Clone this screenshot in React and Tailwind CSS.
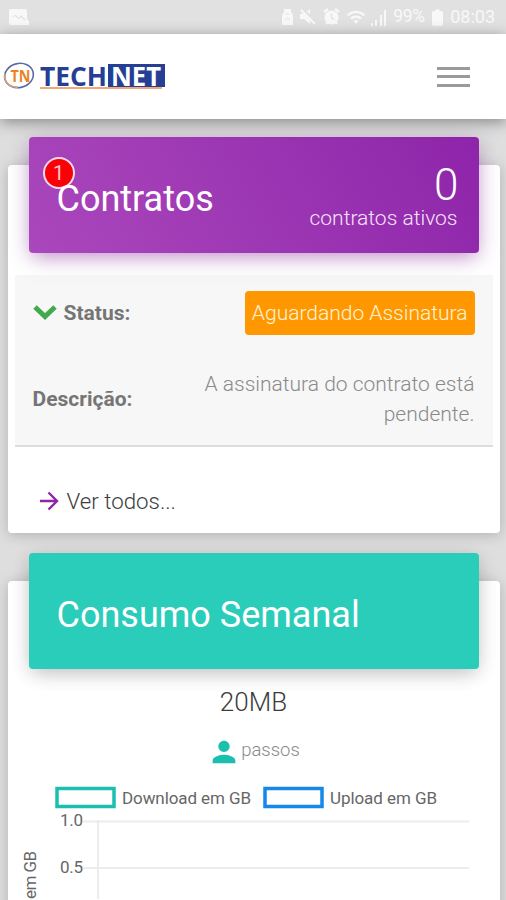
import { MdPerson, MdWifi } from 'react-icons/md';

function StatusBar() {
  return (
    <div className="flex h-[34px] shrink-0 items-center justify-between bg-[#e1e1e1] pl-[9px] pr-[11px] text-[#f8f8f8]">
      <svg width="21" height="17" viewBox="0 0 21 17">
        <path d="M2 0h14q2 0 2 2v8l2 2v4H2q-2 0-2-2V2q0-2 2-2z" fill="currentColor" />
        <path d="M4 8q2-3 4 0t4-1l4 4" fill="none" stroke="#e1e1e1" strokeWidth="1.2" />
      </svg>
      <div className="flex items-center">
        <svg className="mr-[5px]" width="13" height="18" viewBox="0 0 13 18">
          <path d="M3 1h7v3l2 3v10H1V7l2-3z" fill="currentColor" />
          <path d="M4.500 6h4M4 12l2.500-2L9 12" fill="none" stroke="#e1e1e1" />
        </svg>
        <svg className="mr-[6px]" width="18" height="18" viewBox="0 0 18 18">
          <path d="M1 6h4l6-5v15l-6-5H1z" fill="currentColor" />
          <path d="M3 1l14 15" fill="none" stroke="#e1e1e1" strokeWidth="4" />
          <path d="M2 2l14 14" fill="none" stroke="currentColor" strokeWidth="2.200" />
        </svg>
        <svg className="mr-[6px]" width="17" height="18" viewBox="0 0 17 18">
          <circle cx="8.500" cy="9.500" r="7" fill="currentColor" />
          <path d="M1 4l4-3M16 4l-4-3M3 16l2-2M14 16l-2-2" stroke="currentColor" strokeWidth="2.400" />
          <path d="M8.500 5.500v4.500l3 1.500" fill="none" stroke="#e1e1e1" strokeWidth="1.300" />
        </svg>
        <MdWifi className="mr-[5px] size-[20px]" />
        <svg className="mr-[6px]" width="16" height="17" viewBox="0 0 16 17" fill="currentColor">
          <path d="M0 14h2v3H0zM4 11h2v6H4zM9 6h2v11H9zM13 1h2v16h-2z" />
        </svg>
        <span className="w-[34px] text-[17.500px] leading-none tracking-[-0.3px]">99%</span>
        <svg className="ml-[5px] mr-[7px]" width="11" height="17" viewBox="0 0 12 18" fill="currentColor">
          <path d="M4 0h4v2h2q2 0 2 2v12q0 2-2 2H2q-2 0-2-2V4q0-2 2-2h2z" />
        </svg>
        <span className="text-[18px] leading-none">08:03</span>
      </div>
    </div>
  );
}

function Logo() {
  return (
    <svg className="overflow-visible" width="162" height="32" viewBox="0 0 162 32">
      <ellipse cx="15" cy="14.500" rx="14.500" ry="12" fill="none" stroke="#5a6aa8" strokeWidth="1.600" transform="rotate(-14 15 14.500)" />
      <path d="M1 12.500q-1.500 8 5 12 4 2 8 1.500" fill="none" stroke="#d3a17b" strokeWidth="1.600" />
      <text x="6.500" y="20.500" textLength="20" lengthAdjust="spacingAndGlyphs" fontFamily="Open Sans" fontWeight="700" fontSize="16.500" fill="#ee8322">TN</text>
      <rect x="104" y="3" width="57" height="23" fill="#243f94" />
      <text x="36" y="25" textLength="67" lengthAdjust="spacingAndGlyphs" fontFamily="Open Sans" fontWeight="700" fontSize="27.500" fill="#243f94">TECH</text>
      <text x="107" y="25" textLength="50" lengthAdjust="spacingAndGlyphs" fontFamily="Open Sans" fontWeight="700" fontSize="27.500" fill="#fff">NET</text>
      <rect x="36" y="26" width="122" height="2" fill="#f0a878" />
    </svg>
  );
}

function Header() {
  return (
    <header className="relative z-10 flex h-[85px] shrink-0 items-center justify-between bg-white pl-[4px] pr-[36px] shadow-[0_3px_14px_rgba(0,0,0,0.4)]">
      <Logo />
      <div className="flex flex-col gap-[5.500px]">
        <span className="h-[3px] w-[33px] bg-[#9a9a9a]" />
        <span className="h-[3px] w-[33px] bg-[#9a9a9a]" />
        <span className="h-[3px] w-[33px] bg-[#9a9a9a]" />
      </div>
    </header>
  );
}

function ContractsCard() {
  return (
    <section className="ml-[7.500px] mr-[6.500px] mt-[46px] h-[368px] shrink-0 rounded-[4px] bg-white px-[7px] shadow-[0_2px_14px_rgba(0,0,0,0.2)]">
      <div className="relative mx-[14px] -mt-[28px] flex h-[116px] items-center justify-between rounded-[4px] bg-linear-60 from-[#ab47bc] to-[#8e24aa] px-[28px] pr-[21px] text-white shadow-[0_6px_20px_-4px_rgba(156,39,176,0.5),0_4px_20px_rgba(0,0,0,0.1)]">
        <span className="absolute left-[14px] top-[20px] flex size-[32px] items-center justify-center rounded-full border-2 border-[#f3d9ee] bg-[#fb0007] text-[20px] text-[#ffc9c9]">1</span>
        <h2 className="relative mt-[8px] text-[36px] leading-none">Contratos</h2>
        <div className="mt-[1px] text-right font-light">
          <div className="text-[44px] leading-[44px] tracking-[-1px]">0</div>
          <div className="text-[21px] leading-[22px] text-[#f6e4f8]">contratos ativos</div>
        </div>
      </div>

      <div className="mt-[22px] border-b-2 border-[#dddddd] bg-[#f7f7f7] pl-[18px] pr-[18px] text-[21px] text-[#757575]">
        <div className="flex h-[76px] items-center justify-between">
          <div className="flex items-center gap-[7px]">
            <svg width="24" height="16" viewBox="0 0 24 16">
              <path d="M2 2l10 9.500L22 2" fill="none" stroke="#43a850" strokeWidth="5" />
            </svg>
            <span className="pt-[2px] text-[21px] font-bold">Status:</span>
          </div>
          <span className="flex h-[44px] items-center rounded-[4px] bg-[#ff9800] px-[7px] pt-[1px] font-light text-[#fff3d6]">Aguardando Assinatura</span>
        </div>
        <div className="flex h-[94px] items-center justify-between pt-[2px]">
          <span className="pt-[2px] text-[21px] font-bold">Descrição:</span>
          <p className="w-[290px] text-right font-light leading-[30px] text-[#8a8a8a]">A assinatura do contrato está pendente.</p>
        </div>
      </div>

      <a href="#" className="mt-[39px] flex items-center gap-[8px] pl-[24px] text-[22.300px] font-light leading-[30px] text-[#3c3c3c]">
        <svg width="20" height="20" viewBox="0 0 20 20" fill="none" stroke="#8e24aa" strokeWidth="2.400">
          <path d="M1 10h17M9.500 1.500L18 10l-8.500 8.500" />
        </svg>
        Ver todos...
      </a>
    </section>
  );
}

function UsageChart() {
  return (
    <svg className="block" width="492" height="120" viewBox="0 0 492 120" fontFamily="Roboto" fontSize="17" fill="#666">
      <rect x="49" y="9.500" width="57" height="18" fill="#fff" stroke="#1bbfae" strokeWidth="3.500" />
      <text x="114" y="24.500" textLength="129">Download em GB</text>
      <rect x="257" y="9.500" width="57" height="18" fill="#fff" stroke="#1787e8" strokeWidth="3.500" />
      <text x="322" y="24.500" textLength="107">Upload em GB</text>
      <path d="M75 42.500H461M75 89H461M90 41V120" stroke="#ececec" strokeWidth="2" />
      <text x="52" y="47" textLength="23">1.0</text>
      <text x="52" y="94" textLength="23">0.5</text>
      <text transform="translate(28 169) rotate(-90)" textLength="97">Dados em GB</text>
    </svg>
  );
}

function UsageCard() {
  return (
    <section className="ml-[7.500px] mr-[6.500px] mt-[48px] h-[400px] shrink-0 rounded-[4px] bg-white shadow-[0_2px_14px_rgba(0,0,0,0.2)]">
      <div className="relative mx-[21px] -mt-[28px] flex h-[116px] items-center rounded-[4px] bg-[#2accba] px-[28px] pt-[7px] text-white shadow-[0_6px_20px_-4px_rgba(0,0,0,0.2),0_4px_20px_rgba(0,0,0,0.1)]">
        <h2 className="text-[36px] leading-none">Consumo Semanal</h2>
      </div>
      <h3 className="mt-[17px] text-center text-[26px] font-light leading-[32px] text-[#3c3c3c]">20MB</h3>
      <div className="mt-[17px] flex h-[34px] items-center justify-center">
        <MdPerson className="size-[34px] text-[#1bbfae]" />
        <span className="pb-[3px] text-[18.500px] font-light leading-none text-[#8a8a8a]">passos</span>
      </div>
      <div className="mt-[10px]">
        <UsageChart />
      </div>
    </section>
  );
}

export default function App() {
  return (
    <div className="flex h-[900px] w-[506px] flex-col overflow-hidden bg-[#dedede] font-['Roboto',sans-serif]">
      <StatusBar />
      <Header />
      <ContractsCard />
      <UsageCard />
    </div>
  );
}
